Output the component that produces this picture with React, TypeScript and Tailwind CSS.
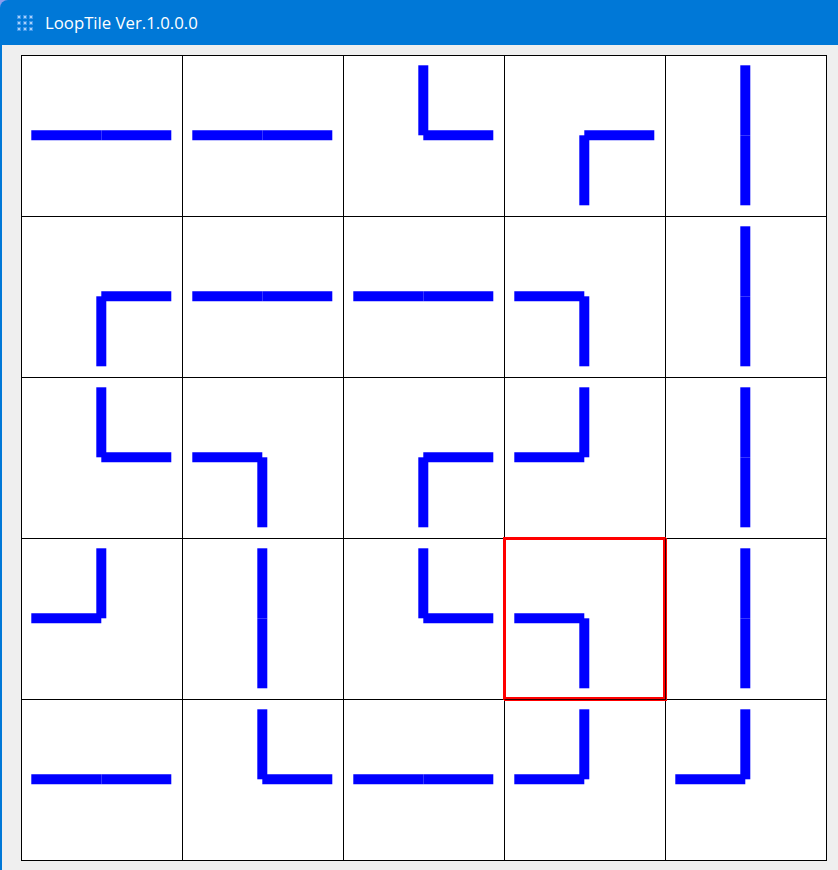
type Side = 'l' | 'r' | 't' | 'b';

// each tile joins the centre to two of its sides
const tiles: [Side, Side][] = [
  ['l', 'r'], ['l', 'r'], ['t', 'r'], ['r', 'b'], ['t', 'b'],
  ['r', 'b'], ['l', 'r'], ['l', 'r'], ['l', 'b'], ['t', 'b'],
  ['t', 'r'], ['l', 'b'], ['r', 'b'], ['l', 't'], ['t', 'b'],
  ['l', 't'], ['t', 'b'], ['t', 'r'], ['l', 'b'], ['t', 'b'],
  ['l', 'r'], ['t', 'r'], ['l', 'r'], ['l', 't'], ['l', 't'],
];

const SELECTED = 18;
const C = 79.3;
const ends: Record<Side, [number, number]> = {
  l: [9.3, C],
  r: [149.3, C],
  t: [C, 9.3],
  b: [C, 149.3],
};

function Tile({ sides, selected }: { sides: [Side, Side]; selected: boolean }) {
  return (
    <div className="relative w-[161px] h-[161px] border-l border-t border-black bg-white">
      <svg width="160" height="160" viewBox="0 0 160 160" className="block">
        {sides.map((s) => (
          <line key={s} x1={C} y1={C} x2={ends[s][0]} y2={ends[s][1]} stroke="#0000ff" strokeWidth="10" />
        ))}
      </svg>
      {/* red frame sits over the grid lines, which still show through on the right and bottom */}
      {selected && (
        <div className="absolute -left-[2px] -top-[2px] z-10 w-[163px] h-[163px] border-l-[3px] border-t-[3px] border-r border-b border-l-[#ff0000] border-t-[#ff0000] border-r-[#300000] border-b-[#300000] shadow-[1px_1px_0_#ff0000,inset_-2px_-2px_0_#ff0000]" />
      )}
    </div>
  );
}

function AppIcon() {
  return (
    <svg width="16" height="16" viewBox="0 0 16 16" className="block">
      {[0, 6, 12].map((x) =>
        [0, 6, 12].map((y) => (
          <g key={`${x}-${y}`}>
            <rect x={x} y={y} width="4" height="4" fill="#3f96ea" />
            <rect x={x + 1} y={y + 1} width="2" height="2" fill="#a9d3f8" />
          </g>
        )),
      )}
    </svg>
  );
}

export default function App() {
  return (
    <div className="w-[838px] h-[870px] overflow-hidden">
      <div className="h-[45px] bg-[#8b9dee]">
        <div className="flex h-[45px] items-center pl-[17px] rounded-tl-[8px] bg-[#0078d7]">
          <AppIcon />
          <span className="ml-[12px] text-[16.75px] text-white font-['Open_Sans',sans-serif]">LoopTile Ver.1.0.0.0</span>
        </div>
      </div>
      <div className="h-[825px] border-l-2 border-[#0078d7] bg-[#efefef] pl-[19px] pt-[10px]">
        <div className="grid w-[806px] grid-cols-[repeat(5,161px)] border-r border-b border-black">
          {tiles.map((sides, i) => (
            <Tile key={i} sides={sides} selected={i === SELECTED} />
          ))}
        </div>
      </div>
    </div>
  );
}
